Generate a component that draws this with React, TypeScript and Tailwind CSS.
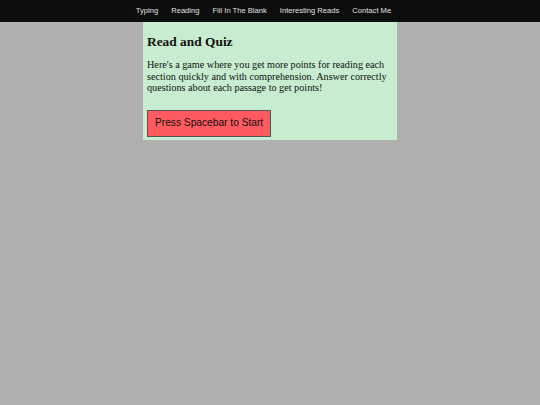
export default function App() {
  const links = ['Typing', 'Reading', 'Fill In The Blank', 'Interesting Reads', 'Contact Me']
  return (
    <div className="min-h-[405px] bg-[#b0b0b0] font-['Liberation_Serif',serif]">
      <nav className="h-[22px] bg-[#0d0d0d] flex items-center justify-center gap-[13px] pr-[13px] font-['Liberation_Sans',sans-serif] text-[7.6px] text-[#e0e0e0]">
        {links.map((l) => (
          <a key={l} href="#">
            {l}
          </a>
        ))}
      </nav>
      <main className="mx-auto w-[254px] bg-[#c8ecd0] px-[4px] pt-[12px] pb-[3px] text-[#111]">
        <h1 className="text-[13.4px] font-bold leading-[16px]">Read and Quiz</h1>
        <p className="mt-[9px] text-[10.2px] leading-[11.5px]">
          Here's a game where you get more points for reading each section quickly and with comprehension. Answer correctly questions about each passage to get points!
        </p>
        <button className="mt-[16px] h-[27px] px-[7px] bg-[#ff5a5f] border border-[#555] font-['Liberation_Sans',sans-serif] text-[10.2px] text-[#111]">
          Press Spacebar to Start
        </button>
      </main>
    </div>
  )
}
